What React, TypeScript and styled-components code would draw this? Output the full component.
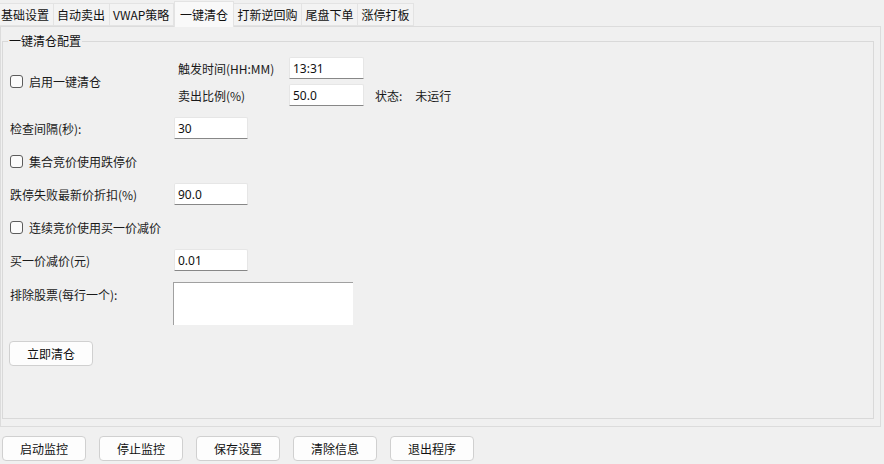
import React, { useState } from "react";
import styled, { createGlobalStyle } from "styled-components";

const GlobalStyle = createGlobalStyle`
  html, body {
    margin: 0;
    padding: 0;
    background: #f0f0f0;
  }
  body {
    font-family: "Noto Sans CJK SC", "Noto Sans", sans-serif;
    font-size: 12px;
    color: #1a1a1a;
  }
`;

const Window = styled.div`
  width: 884px;
  height: 464px;
  display: flex;
  flex-direction: column;
  box-sizing: border-box;
  padding: 2px 3px 3px 0;
`;

const TabBar = styled.div`
  display: flex;
  align-items: flex-end;
  height: 25px;
  position: relative;
  z-index: 1;
  margin-bottom: -1px;
`;

const Tab = styled.div<{ $active: boolean }>`
  box-sizing: border-box;
  height: ${({ $active }) => ($active ? "26px" : "23px")};
  padding: 0 ${({ $active }) => ($active ? "5px" : "3.5px")};
  margin-bottom: ${({ $active }) => ($active ? "0" : "1px")};
  display: flex;
  align-items: center;
  background: ${({ $active }) => ($active ? "#f9f9f9" : "#f3f3f3")};
  border: 1px solid #e3e3e3;
  border-bottom: ${({ $active }) => ($active ? "none" : "1px solid #e3e3e3")};
  border-left: ${({ $active }) => ($active ? "1px solid #e3e3e3" : "none")};
  white-space: nowrap;
  color: #111;
  &:first-child {
    border-left: none;
    padding-left: 1px;
  }
`;

const Pane = styled.div`
  height: 401px;
  box-sizing: border-box;
  border: 1px solid #dcdcdc;
  padding: 7px 6px 7px 1px;
  display: flex;
`;

const Group = styled.fieldset`
  flex: 1;
  margin: 0;
  border: 1px solid #d9d9d9;
  padding: 9px 7px 0 7px;
  min-width: 0;
`;

const Legend = styled.legend`
  padding: 0 1px;
  margin-left: -2px;
  line-height: 14px;
  color: #111;
`;

const Column = styled.div`
  display: flex;
  flex-direction: column;
  gap: 11px;
`;

const TopBlock = styled.div`
  display: flex;
  align-items: center;
  height: 49px;
`;

const TopLeft = styled.div`
  width: 168px;
  display: flex;
  align-items: center;
`;

const TopGrid = styled.div`
  display: grid;
  grid-template-columns: 111px 75px auto;
  row-gap: 5px;
  align-items: center;
`;

const Status = styled.div`
  display: flex;
  gap: 13px;
  padding-left: 11px;
`;

const Row = styled.div`
  display: flex;
  align-items: center;
  min-height: 22px;
`;

const RowTop = styled.div`
  display: flex;
  align-items: flex-start;
`;

const Label = styled.span<{ $width?: number; $offset?: number }>`
  width: ${({ $width }) => ($width ? `${$width}px` : "auto")};
  margin-top: ${({ $offset }) => $offset ?? 0}px;
  flex: none;
  white-space: nowrap;
`;

const Input = styled.input<{ $width: number }>`
  box-sizing: border-box;
  width: ${({ $width }) => $width}px;
  height: 22px;
  margin: 0;
  padding: 0 3px;
  border: 1px solid #e6e6e6;
  border-bottom: 1px solid #878787;
  border-radius: 2px 2px 0 0;
  background: #fff;
  font: inherit;
  font-family: "Noto Sans", "Noto Sans CJK SC", sans-serif;
  font-size: 12px;
  color: #111;
  outline: none;
`;

const TextArea = styled.textarea`
  box-sizing: border-box;
  width: 180px;
  height: 43px;
  margin: 0 0 0 -1px;
  padding: 2px;
  border: none;
  border-top: 1px solid #a0a0a0;
  border-left: 1px solid #a0a0a0;
  background: #fff;
  resize: none;
  outline: none;
  font: inherit;
`;

const CheckLabel = styled.label`
  display: flex;
  align-items: center;
  gap: 6px;
  cursor: default;
`;

const CheckBox = styled.span<{ $checked: boolean }>`
  box-sizing: border-box;
  width: 13px;
  height: 13px;
  border: 1px solid #5c5c5c;
  border-radius: 3px;
  background: ${({ $checked }) => ($checked ? "#005fb8" : "#fbfbfb")};
  display: flex;
  align-items: center;
  justify-content: center;
  color: #fff;
  font-size: 10px;
  line-height: 1;
`;

const Button = styled.button`
  box-sizing: border-box;
  width: 84px;
  height: 25px;
  margin: 0;
  padding: 0;
  border: 1px solid #d0d0d0;
  border-radius: 4px;
  background: #fdfdfd;
  font: inherit;
  color: #111;
`;

const ActionRow = styled.div`
  margin-top: 5px;
  margin-left: -1px;
`;

const Footer = styled.div`
  display: flex;
  gap: 13px;
  padding: 9px 0 0 2px;
`;

const TABS = ["基础设置", "自动卖出", "VWAP策略", "一键清仓", "打新逆回购", "尾盘下单", "涨停打板"];
const FOOTER = ["启动监控", "停止监控", "保存设置", "清除信息", "退出程序"];

const Check = ({ label }: { label: string }) => {
  const [checked, setChecked] = useState(false);
  return (
    <CheckLabel onClick={() => setChecked(!checked)}>
      <CheckBox $checked={checked}>{checked ? "✓" : ""}</CheckBox>
      {label}
    </CheckLabel>
  );
};

export default function App() {
  return (
    <>
      <GlobalStyle />
      <Window>
        <TabBar>
          {TABS.map((t) => (
            <Tab key={t} $active={t === "一键清仓"}>
              {t}
            </Tab>
          ))}
        </TabBar>
        <Pane>
          <Group>
            <Legend>一键清仓配置</Legend>
            <Column>
              <TopBlock>
                <TopLeft>
                  <Check label="启用一键清仓" />
                </TopLeft>
                <TopGrid>
                  <Label>触发时间(HH:MM)</Label>
                  <Input $width={75} defaultValue="13:31" />
                  <span />
                  <Label>卖出比例(%)</Label>
                  <Input $width={75} defaultValue="50.0" />
                  <Status>
                    <span>状态:</span>
                    <span>未运行</span>
                  </Status>
                </TopGrid>
              </TopBlock>
              <Row>
                <Label $width={164}>检查间隔(秒):</Label>
                <Input $width={74} defaultValue="30" />
              </Row>
              <Row>
                <Check label="集合竞价使用跌停价" />
              </Row>
              <Row>
                <Label $width={164}>跌停失败最新价折扣(%)</Label>
                <Input $width={74} defaultValue="90.0" />
              </Row>
              <Row>
                <Check label="连续竞价使用买一价减价" />
              </Row>
              <Row>
                <Label $width={164}>买一价减价(元)</Label>
                <Input $width={74} defaultValue="0.01" />
              </Row>
              <RowTop>
                <Label $width={164} $offset={4}>
                  排除股票(每行一个):
                </Label>
                <TextArea />
              </RowTop>
              <ActionRow>
                <Button>立即清仓</Button>
              </ActionRow>
            </Column>
          </Group>
        </Pane>
        <Footer>
          {FOOTER.map((f) => (
            <Button key={f}>{f}</Button>
          ))}
        </Footer>
      </Window>
    </>
  );
}
